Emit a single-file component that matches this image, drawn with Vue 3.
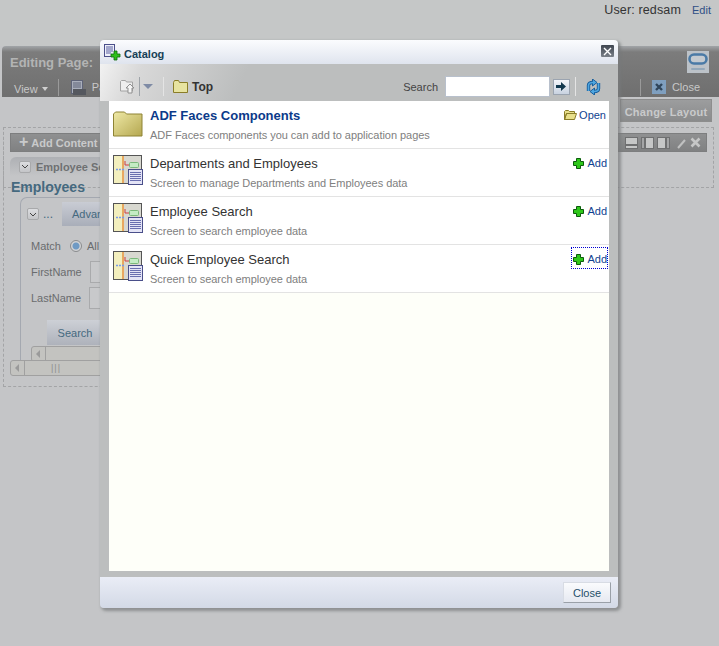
<script setup>
const rows = [
  { title: 'ADF Faces Components', desc: 'ADF Faces components you can add to application pages', folder: true },
  { title: 'Departments and Employees', desc: 'Screen to manage Departments and Employees data' },
  { title: 'Employee Search', desc: 'Screen to search employee data' },
  { title: 'Quick Employee Search', desc: 'Screen to search employee data', focused: true },
]
</script>

<template>
  <div class="page">
    <div class="userbar">
      <span class="user">User: redsam</span>
      <span class="edit">Edit</span>
    </div>

    <div class="editor">
      <div class="editor-top">
        <span class="editing">Editing Page:</span>
        <svg class="oracle" width="22" height="22" viewBox="0 0 22 22">
          <rect width="22" height="22" fill="#bcc2c8" />
          <rect x="2.500" y="3.500" width="17" height="9" rx="4.500" fill="#c4cad0" stroke="#4a7aa6" stroke-width="2.600" />
          <rect x="4" y="17" width="14" height="2" rx="1" fill="#94a8ba" />
        </svg>
      </div>
      <div class="editor-menu">
        <span class="view">View</span>
        <span class="caret"></span>
        <span class="sep"></span>
        <svg width="16" height="15" viewBox="0 0 16 15">
          <rect x="1.500" y="0.500" width="11" height="13" fill="#a9aebb" stroke="#5f6478" />
          <path d="M3 3h8M3 5h8M3 7h8" stroke="#5f6478" />
          <rect x="3" y="9" width="13" height="6" fill="#55585f" />
        </svg>
        <span class="page-link">Page</span>
        <span class="spacer"></span>
        <span class="sep"></span>
        <svg width="14" height="14" viewBox="0 0 14 14">
          <rect width="14" height="14" fill="#7f9fbf" />
          <path d="M4 4l6 6M10 4l-6 6" stroke="#30465c" stroke-width="2.400" />
        </svg>
        <span class="close-link">Close</span>
      </div>
    </div>

    <div class="layout-row"><span class="change-layout">Change Layout</span></div>

    <div class="region">
      <div class="content-bar">
        <span class="add-content"><b class="plus">+</b>Add Content</span>
        <span class="bar-tools">
          <svg width="13" height="12" viewBox="0 0 13 12">
            <rect x="0.500" y="0.500" width="12" height="7" fill="#c6c7c7" stroke="#6f7071" />
            <rect x="0.500" y="8.500" width="12" height="3" fill="#c6c7c7" stroke="#6f7071" />
          </svg>
          <svg width="13" height="12" viewBox="0 0 13 12">
            <rect x="0.500" y="0.500" width="3" height="11" fill="#a4a5a6" stroke="#6f7071" />
            <rect x="4.500" y="0.500" width="8" height="11" fill="#c6c7c7" stroke="#6f7071" />
          </svg>
          <svg width="13" height="12" viewBox="0 0 13 12">
            <rect x="0.500" y="0.500" width="8" height="11" fill="#c6c7c7" stroke="#6f7071" />
            <rect x="9.500" y="0.500" width="3" height="11" fill="#a4a5a6" stroke="#6f7071" />
          </svg>
          <svg class="pencil" width="10" height="12" viewBox="0 0 10 12"><path d="M1 11l7-8" stroke="#c0c1c1" stroke-width="2" /></svg>
          <svg width="11" height="11" viewBox="0 0 11 11"><path d="M1.500 1.500l8 8M9.500 1.500l-8 8" stroke="#c6c7c7" stroke-width="2.600" /></svg>
        </span>
      </div>
    </div>

    <div class="task">
      <div class="task-head">
        <span class="chev"><svg width="8" height="5" viewBox="0 0 8 5"><path d="M1 1l3 3 3-3" fill="none" stroke="#444" /></svg></span>
        <b>Employee Search</b>
      </div>
      <div class="employees">Employees</div>
      <div class="panel">
        <div class="panel-tabs">
          <span class="chev"><svg width="8" height="5" viewBox="0 0 8 5"><path d="M1 1l3 3 3-3" fill="none" stroke="#444" /></svg></span>
          <span class="dots">...</span>
          <span class="tab">Advanced</span>
        </div>
        <div class="field"><label class="short">Match</label><span class="radio"></span><span>All</span></div>
        <div class="field"><label>FirstName</label><span class="input"></span></div>
        <div class="field"><label>LastName</label><span class="input"></span></div>
        <span class="search-btn">Search</span>
        <div class="scroll inner"><span class="arrow"></span></div>
      </div>
      <div class="scroll outer"><span class="arrow"></span><span class="grip">|||</span></div>
    </div>

    <div class="dialog">
      <div class="dialog-title">
        <svg width="17" height="17" viewBox="0 0 17 17">
          <rect x="0.500" y="0.500" width="10" height="12" fill="#eef0fa" stroke="#4a4f8a" />
          <path d="M2 3h7M2 5h7M2 7h7M2 9h5" stroke="#5a60a0" />
          <path d="M8 9h3V6h3v3h3v3h-3v3h-3v-3H8z" transform="translate(-1 1)" fill="#2fbf1a" stroke="#0e6a0e" stroke-width="0.800" />
        </svg>
        <span class="catalog">Catalog</span>
        <span class="x-btn">
          <svg width="9" height="9" viewBox="0 0 9 9"><path d="M1 1l7 7M8 1l-7 7" stroke="#fff" stroke-width="1.400" /></svg>
        </span>
      </div>

      <div class="toolbar">
        <svg class="up" width="16" height="15" viewBox="0 0 16 15">
          <path d="M0.500 2.500l1-1h4l1 1.500h6v9h-12z" fill="#eee" stroke="#a2a2a2" />
          <path d="M10 5l4 4h-2v5h-4V9H6z" fill="#f4f4f4" stroke="#8f8f8f" />
        </svg>
        <span class="tsep"></span>
        <span class="down"></span>
        <span class="tsep wide"></span>
        <svg width="15" height="13" viewBox="0 0 15 13">
          <path d="M0.500 2.500l1-2h4l1 2h8v10h-14z" fill="#e7e3a0" stroke="#8a7d28" />
        </svg>
        <b class="top">Top</b>
        <span class="spacer"></span>
        <span class="search-label">Search</span>
        <span class="search-box"></span>
        <span class="go">
          <svg width="11" height="9" viewBox="0 0 11 9"><path d="M0 3h5V0l5 4.500L5 9V6H0z" fill="#12384e" /></svg>
        </span>
        <span class="tsep last"></span>
        <svg width="17" height="16" viewBox="0 0 17 16">
          <g>
            <path d="M3.500 12V6.500Q3.500 3.500 8 3.500" fill="none" stroke="#1a5f9c" stroke-width="3.400" />
            <path d="M7.500 0l4.500 3.500L7.500 7z" fill="#4fa6e0" stroke="#1a5f9c" stroke-linejoin="round" />
            <path d="M3.500 12V6.500Q3.500 3.500 8 3.500" fill="none" stroke="#4fa6e0" stroke-width="1.600" />
          </g>
          <g transform="rotate(180 8.500 8)">
            <path d="M3.500 12V6.500Q3.500 3.500 8 3.500" fill="none" stroke="#1a5f9c" stroke-width="3.400" />
            <path d="M7.500 0l4.500 3.500L7.500 7z" fill="#4fa6e0" stroke="#1a5f9c" stroke-linejoin="round" />
            <path d="M3.500 12V6.500Q3.500 3.500 8 3.500" fill="none" stroke="#4fa6e0" stroke-width="1.600" />
          </g>
        </svg>
      </div>

      <div class="dialog-body">
        <div class="list">
          <div v-for="row in rows" :key="row.title" class="row">
            <svg v-if="row.folder" class="big-icon" width="30" height="26" viewBox="0 0 30 26">
              <defs>
                <linearGradient id="fold" x1="0" y1="0" x2="1" y2="1">
                  <stop offset="0" stop-color="#efe9a6" />
                  <stop offset="1" stop-color="#b4a750" />
                </linearGradient>
              </defs>
              <path d="M0.500 3l2-2h9l2 2h15.500v22h-28.500z" fill="url(#fold)" stroke="#8e8334" />
            </svg>
            <svg v-else class="big-icon" width="30" height="30" viewBox="0 0 30 30">
              <rect x="0.500" y="0.500" width="28" height="28" fill="#f3efbe" stroke="#555" />
              <rect x="10" y="1" width="18" height="27" fill="#d8d8d0" />
              <rect x="9" y="1" width="2" height="27" fill="#e8a860" />
              <rect x="16.500" y="7.500" width="9" height="5" rx="1" fill="#c4ecc4" stroke="#7bb87b" />
              <path d="M12 6v4h4" fill="none" stroke="#d04040" />
              <path d="M3 14.500h8" stroke="#7a9ae8" stroke-dasharray="2 1" stroke-width="1.500" />
              <rect x="15.500" y="14.500" width="14" height="15" fill="#e4e4f6" stroke="#4a4f8a" />
              <path d="M17 17.500h11M17 19.500h11M17 21.500h11M17 23.500h11M17 25.500h11" stroke="#6a6fb0" />
            </svg>
            <div class="row-text">
              <div class="row-title" :class="{ strong: row.folder }">{{ row.title }}</div>
              <div class="row-desc">{{ row.desc }}</div>
            </div>
            <span class="action" :class="{ focused: row.focused, open: row.folder }">
              <svg v-if="row.folder" width="13" height="10" viewBox="0 0 13 10">
                <path d="M0.500 1.500l1-1h3l1 1h5v2h-8l-2 6zM0.500 9.500l2-6h10l-2 6z" fill="#e8df8a" stroke="#8a7d28" />
              </svg>
              <svg v-else width="11" height="11" viewBox="0 0 11 11">
                <path d="M3.500 0.500h4v3h3v4h-3v3h-4v-3h-3v-4h3z" fill="#2fc81a" stroke="#0b5c0b" />
              </svg>
              {{ row.folder ? 'Open' : 'Add' }}
            </span>
          </div>
        </div>
      </div>

      <div class="dialog-footer">
        <span class="close-btn">Close</span>
      </div>
    </div>
  </div>
</template>

<style>
html, body { margin: 0; background: #c4c5c7; }
</style>

<style scoped>
.page {
  position: relative;
  width: 719px;
  height: 646px;
  overflow: hidden;
  background: #c4c5c7;
  font-family: "Liberation Sans", Arial, sans-serif;
  font-size: 11px;
  color: #6c6e70;
}
.userbar {
  height: 46px;
  box-sizing: border-box;
  padding: 3px 8px 0 0;
  display: flex;
  justify-content: flex-end;
  align-items: flex-start;
  gap: 11px;
  background: #c5c7c7;
}
.user { font-size: 12.500px; letter-spacing: 0.15px; color: #333; line-height: 15px; }
.edit { font-size: 11px; color: #2f4f86; line-height: 15px; }
.editor {
  margin-left: 2px;
  height: 51px;
  border-radius: 4px 0 0 0;
  background: linear-gradient(#a2a5a8 0, #7c7c7c 6px, #6f6f6f 100%);
}
.editor-top {
  height: 31px;
  box-sizing: border-box;
  padding: 9px 10px 0 8px;
  display: flex;
  justify-content: space-between;
  align-items: flex-start;
}
.editing { font-size: 13px; font-weight: bold; color: #b3b4b4; }
.oracle { margin-top: -4px; }
.editor-menu {
  height: 20px;
  display: flex;
  align-items: center;
  gap: 6px;
  padding: 0 19px 0 12px;
  color: #c8c8c8;
}
.view, .page-link, .close-link { font-size: 11px; }
.view { margin-top: 3px; }
.caret {
  width: 0;
  height: 0;
  margin: 3px 0 0 -2px;
  border: 3.500px solid transparent;
  border-top: 4px solid #d0d0d0;
  border-bottom: 0;
}
.sep { width: 1px; height: 17px; background: #9a9a9a; margin: 0 5px 0 4px; }
.spacer { flex: 1; }
.layout-row {
  display: flex;
  justify-content: flex-end;
  padding: 2px 7px 0 0;
}
.change-layout {
  width: 92px;
  height: 23px;
  box-sizing: border-box;
  border: 1px solid #8d8d8d;
  background: linear-gradient(#9c9d9e, #8a8b8c);
  color: #c9cacb;
  font-weight: bold;
  font-size: 11px;
  letter-spacing: 0.25px;
  line-height: 24px;
  text-align: center;
}
.region {
  margin: 5px 5px 0 3px;
  height: 61px;
  box-sizing: border-box;
  border: 1px dashed #a3a4a6;
  padding: 5px 6px 0;
}
.content-bar {
  height: 19px;
  box-sizing: border-box;
  border: 1px solid #7d7e7f;
  background: linear-gradient(#8f9091, #808182);
  display: flex;
  justify-content: space-between;
  align-items: center;
  padding: 0 5px 0 8px;
  color: #c9cacb;
}
.add-content { display: flex; align-items: center; gap: 3px; font-weight: bold; font-size: 11px; padding-top: 1px; }
.plus { font-size: 16px; line-height: 10px; margin-top: -3px; }
.bar-tools { display: flex; gap: 3px; align-items: center; }
.pencil { margin-left: 4px; }
.task {
  position: absolute;
  left: 3px;
  top: 127px;
  width: 110px;
  height: 260px;
  box-sizing: border-box;
  border-left: 1px dashed #a3a4a6;
  border-bottom: 1px dashed #a3a4a6;
  padding: 30px 0 0 6px;
}
.task-head {
  height: 19px;
  display: flex;
  align-items: center;
  gap: 5px;
  padding-left: 9px;
  border-radius: 6px 0 0 0;
  background: linear-gradient(#aeb0b4, #c4c5c7);
  white-space: nowrap;
  font-size: 11px;
  color: #6e7072;
}
.chev {
  width: 12px;
  height: 12px;
  box-sizing: border-box;
  border: 1px solid #a8a9ab;
  border-radius: 2px;
  background: linear-gradient(#dcdde0, #c4c5c8);
  display: flex;
  align-items: center;
  justify-content: center;
  flex: none;
}
.employees {
  margin: 1px 0 0 1px;
  height: 20px;
  font-size: 14px;
  font-weight: bold;
  color: #45697f;
  line-height: 21px;
}
.panel {
  position: relative;
  margin: 0 0 0 10px;
  height: 170px;
  box-sizing: border-box;
  border-left: 1px solid #a4a8b0;
  border-top: 1px solid #a4a8b0;
  border-radius: 7px 0 0 0;
  padding: 4px 0 0 6px;
}
.panel-tabs { display: flex; align-items: center; gap: 4px; height: 24px; white-space: nowrap; }
.dots { color: #45697f; font-size: 12px; width: 15px; flex: none; }
.tab {
  flex: none;
  height: 24px;
  line-height: 24px;
  padding: 0 10px;
  background: linear-gradient(#c9ccd4, #a9aeb9);
  color: #45697f;
  font-size: 11px;
}
.field {
  display: flex;
  align-items: center;
  gap: 5px;
  height: 26px;
  padding-left: 4px;
  white-space: nowrap;
  color: #6a6c6e;
  font-size: 11px;
}
.field:nth-of-type(2) { margin-top: 7px; }
.field label { width: 51px; margin-right: 3px; text-align: right; }
.field label.short { width: 31px; margin-right: 3px; text-align: left; }
.radio {
  width: 10px;
  height: 10px;
  border: 1px solid #8a8c8e;
  border-radius: 50%;
  background: radial-gradient(#6f9ac4 0, #6f9ac4 3px, #d2d3d5 4px);
}
.input {
  width: 30px;
  height: 20px;
  border: 1px solid #a9aaac;
  background: #c8c9cb;
}
.search-btn {
  display: block;
  margin: 9px 0 0 20px;
  width: 56px;
  height: 25px;
  line-height: 26px;
  text-align: center;
  background: linear-gradient(#cdd0d6, #aeb2bb);
  color: #45697f;
}
.scroll {
  height: 14px;
  border: 1px solid #a0a0a0;
  border-radius: 3px 0 0 3px;
  background: #c3c3c0;
  display: flex;
  align-items: center;
}
.scroll.inner { margin: 1px 0 0 4px; }
.scroll.outer { position: absolute; left: 6px; top: 233px; right: 0; }
.arrow {
  display: block;
  width: 13px;
  height: 14px;
  border-right: 1px solid #a0a0a0;
  position: relative;
}
.arrow::after {
  content: '';
  position: absolute;
  left: 4px;
  top: 3px;
  border: 4px solid transparent;
  border-left: 0;
  border-right: 4px solid #9a9a9a;
}
.grip { margin-left: 26px; color: #8e8e8e; font-size: 9px; letter-spacing: 1px; }

.dialog {
  position: absolute;
  left: 100px;
  top: 40px;
  width: 518px;
  height: 568px;
  border-radius: 4px;
  background: #bcbebe;
  box-shadow: 2px 2px 3px 1px rgba(120, 122, 124, 0.7);
  overflow: hidden;
  display: flex;
  flex-direction: column;
}
.dialog-title {
  height: 24px;
  flex: none;
  display: flex;
  align-items: center;
  padding: 0 4px 0 4px;
  gap: 3px;
  background: linear-gradient(#fbfcfe, #dfe4ee);
}
.catalog { font-size: 11px; font-weight: bold; color: #173f55; flex: 1; padding-top: 4px; }
.x-btn {
  width: 13px;
  height: 12px;
  margin-top: -2px;
  background: linear-gradient(#3f4650, #7a8088);
  border-radius: 1px;
  display: flex;
  align-items: center;
  justify-content: center;
}
.toolbar {
  height: 37px;
  flex: none;
  box-sizing: border-box;
  padding: 8px 16px 0 20px;
  display: flex;
  align-items: center;
  background: linear-gradient(115deg, #f2f2f2 0, #d8d8d8 8%, #bcbebe 28%, #bcbebe 100%);
}
.tsep { width: 1px; height: 19px; background: #9ea3a8; margin: 0 0 0 3px; }
.down {
  margin-left: 3px;
  width: 0;
  height: 0;
  border: 5px solid transparent;
  border-top: 5px solid #7f8ba5;
  border-bottom: 0;
}
.tsep.wide { margin: 0 9px 0 10px; background: #e4e4e4; }
.top { margin-left: 4px; font-size: 12px; color: #333; }
.search-label { font-size: 11px; color: #444; }
.search-box {
  margin-left: 7px;
  width: 105px;
  height: 21px;
  box-sizing: border-box;
  border: 1px solid #b8c0cc;
  background: #fff;
}
.go {
  margin-left: 3px;
  width: 17px;
  height: 16px;
  background: linear-gradient(#f4f6fa, #c8d2e0);
  border: 1px solid #9ba4b0;
  box-sizing: border-box;
  display: flex;
  align-items: center;
  justify-content: center;
}
.tsep.last { margin: 0 9px 0 5px; background: #e4e4e4; }
.dialog-body {
  flex: 1;
  margin: 0 9px 6px;
  background: #fefff9;
}
.list { display: flex; flex-direction: column; }
.row {
  height: 48px;
  box-sizing: border-box;
  background: #fff;
  border-bottom: 1px solid #e3e3e3;
  display: flex;
  align-items: flex-start;
  padding: 6px 2px 0 4px;
  position: relative;
}
.big-icon { flex: none; margin-right: 7px; }
.row:first-child .big-icon { margin-top: 4px; }
.row-text { flex: 1; }
.row-title { font-size: 13px; color: #333; line-height: 17px; }
.row-title.strong { font-weight: bold; color: #0b3a8a; }
.row-desc { margin-top: 4px; font-size: 11px; color: #808080; line-height: 14px; letter-spacing: -0.04px; }
.action {
  display: flex;
  align-items: center;
  gap: 3px;
  font-size: 11px;
  color: #103f90;
  height: 16px;
  padding: 0 0 0 1px;
}
.action.open { gap: 2px; padding-right: 1px; }
.action.focused {
  margin-top: -3px;
  padding-top: 3px;
  padding-bottom: 1px;
  outline: 1px dotted #0000d0;
}
.dialog-footer {
  height: 31px;
  flex: none;
  box-sizing: border-box;
  display: flex;
  justify-content: flex-end;
  align-items: center;
  padding: 0 7px 0 0;
  background: linear-gradient(#eaedf6, #d3d9e6);
}
.close-btn {
  width: 48px;
  height: 21px;
  box-sizing: border-box;
  border: 1px solid #9aa0a8;
  border-top-color: #d8dce4;
  border-left-color: #d8dce4;
  background: linear-gradient(#fafbfd, #e6e9f1);
  color: #1f4f6a;
  font-size: 11px;
  line-height: 20px;
  text-align: center;
}
</style>
